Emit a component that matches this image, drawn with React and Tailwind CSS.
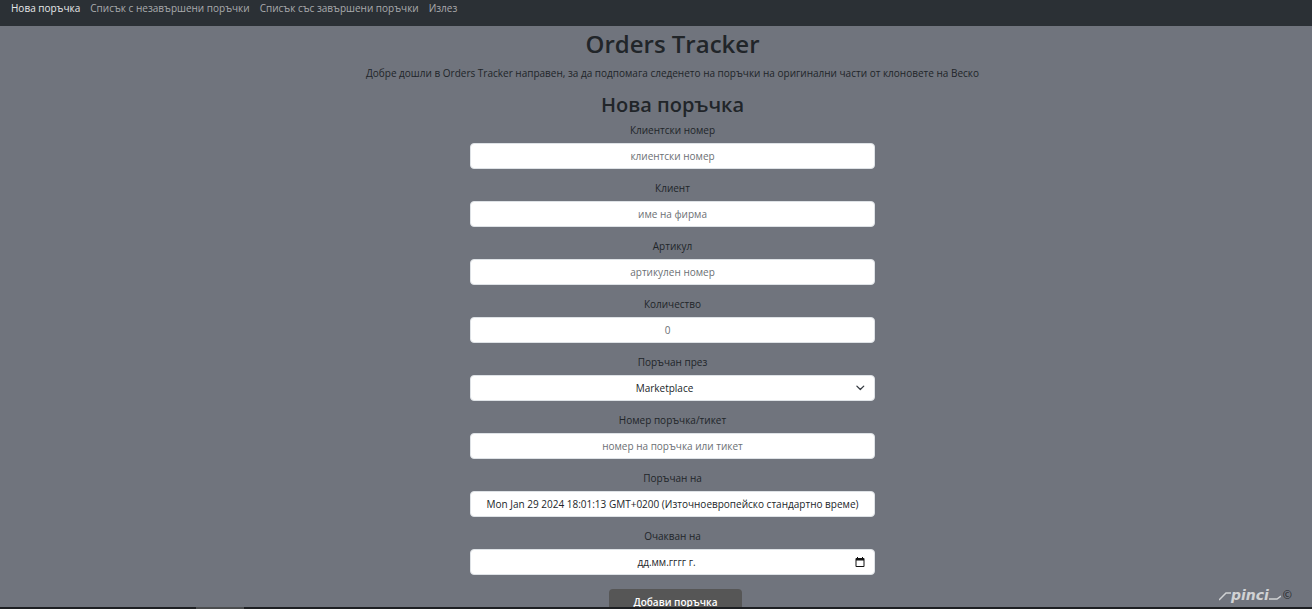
import React from "react";

const links = [
  "Нова поръчка",
  "Списък с незавършени поръчки",
  "Списък със завършени поръчки",
  "Излез",
];

const control =
  "h-[26px] w-full rounded border border-[#dee2e6] bg-white text-center text-[10px] leading-4 text-[#212529] placeholder:text-[#6b6f74] placeholder:opacity-100";

function Field({ id, label, children }) {
  return (
    <div className="mb-[11px] flex w-full flex-col">
      <label htmlFor={id} className="mx-auto mb-[5px] text-[10px] leading-4">
        {label}
      </label>
      {children}
    </div>
  );
}

export default function App() {
  return (
    <div className="flex h-screen flex-col bg-[#70747d] font-['Open_Sans','Noto_Sans',sans-serif] text-[#212529]">
      <header className="h-[26px] shrink-0 bg-[#2b3035]">
        <nav className="flex gap-2.5 pl-[11px] text-[10px] leading-4">
          {links.map((text, i) => (
            <a
              key={text}
              href="#"
              className={i === 0 ? "text-[#e6e7e8]" : "text-[#a9abad]"}
            >
              {text}
            </a>
          ))}
        </nav>
      </header>

      <main className="relative min-h-0 flex-1 overflow-hidden pl-[33px]">
        <div className="flex flex-col items-center pt-0.5">
          <h1 className="text-[24px] leading-8 font-semibold">Orders Tracker</h1>
          <p className="mt-[5px] text-[10px] leading-4">
            Добре дошли в Orders Tracker направен, за да подпомага следенето на
            поръчки на оригинални части от клоновете на Веско
          </p>
          <h2 className="mt-2.5 text-[20px] leading-7 font-semibold">
            Нова поръчка
          </h2>
          <form
            className="mt-[3px] flex w-full max-w-[405px] flex-col items-center"
            onSubmit={(e) => e.preventDefault()}
          >
            <Field id="number" label="Клиентски номер">
              <input id="number" type="text" placeholder="клиентски номер" className={control} />
            </Field>
            <Field id="client" label="Клиент">
              <input id="client" type="text" placeholder="име на фирма" className={control} />
            </Field>
            <Field id="article" label="Артикул">
              <input id="article" type="text" placeholder="артикулен номер" className={control} />
            </Field>
            <Field id="quantity" label="Количество">
              <input id="quantity" type="text" inputMode="numeric" placeholder="0" className={`${control} pr-2.5`} />
            </Field>
            <Field id="source" label="Поръчан през">
              <div className="relative">
                <select id="source" className={`${control} block appearance-none pr-4`}>
                  <option>Marketplace</option>
                </select>
                <svg
                  viewBox="0 0 16 16"
                  className="pointer-events-none absolute top-2 right-2.5 size-2.5"
                  fill="none"
                  stroke="#343a40"
                  strokeWidth="2"
                  strokeLinecap="round"
                  strokeLinejoin="round"
                >
                  <path d="m3 5 5.500 5.500L14 5" />
                </svg>
              </div>
            </Field>
            <Field id="ticket" label="Номер поръчка/тикет">
              <input id="ticket" type="text" placeholder="номер на поръчка или тикет" className={control} />
            </Field>
            <Field id="ordered" label="Поръчан на">
              <input
                id="ordered"
                type="text"
                defaultValue="Mon Jan 29 2024 18:01:13 GMT+0200 (Източноевропейско стандартно време)"
                className={control}
              />
            </Field>
            <Field id="expected" label="Очакван на">
              <div className="relative">
                <input
                  id="expected"
                  type="text"
                  placeholder="дд.мм.гггг г."
                  className="block h-[26px] w-full rounded border border-[#dee2e6] bg-white pr-3 text-center text-[10px] leading-4 placeholder:text-[#212529] placeholder:opacity-100"
                />
                <button type="button" aria-label="Календар" className="absolute top-2 right-2.5">
                  <svg viewBox="0 0 10 10" className="block size-2.5">
                    <path
                      fill="#111"
                      fillRule="evenodd"
                      d="M2 0h1v1h4V0h1v1h.5a1 1 0 0 1 1 1v7a1 1 0 0 1-1 1h-7a1 1 0 0 1-1-1V2a1 1 0 0 1 1-1H2ZM1.500 3.500V9h7V3.500Z"
                    />
                  </svg>
                </button>
              </div>
            </Field>
            <button
              type="submit"
              className="mt-[3px] ml-1.5 h-[26px] w-[133px] rounded bg-[#565656] text-[10px] leading-4 font-semibold text-white"
            >
              Добави поръчка
            </button>
          </form>
        </div>
        <div className="absolute right-5 bottom-1 flex items-center gap-0.5 text-[11px] leading-4">
          <span className="flex items-center text-[#d0d2d4]">
            <svg viewBox="0 0 12 12" className="size-3" fill="none" stroke="currentColor" strokeWidth="1.5">
              <path d="M0 11 7 4H12" />
            </svg>
            <span className="font-['DejaVu_Sans',sans-serif] text-[14px] leading-4 font-bold italic">
              pinci
            </span>
            <svg viewBox="0 0 12 12" className="size-3" fill="none" stroke="currentColor" strokeWidth="1.5">
              <path d="M0 10H8L12 7" />
            </svg>
          </span>
          <span>©</span>
        </div>
      </main>

      <footer className="flex h-0.5 shrink-0 bg-[#1d1f22] pl-[196px]">
        <div className="w-12 bg-[#4b4d4f]" />
      </footer>
    </div>
  );
}
